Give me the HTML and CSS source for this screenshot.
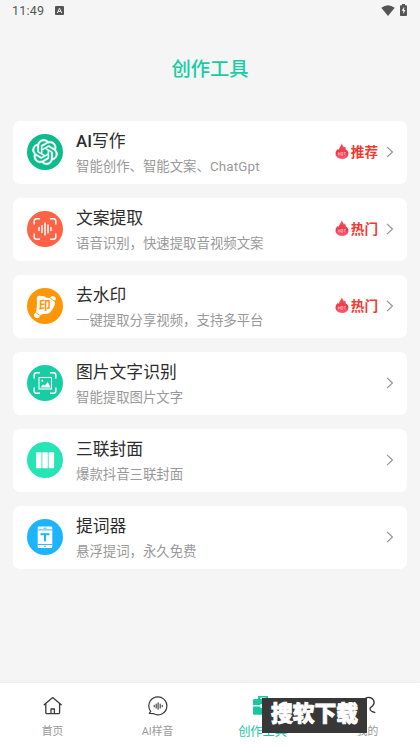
FILE: index.html
```html
<!DOCTYPE html>
<html lang="zh-CN">
<head>
<meta charset="utf-8">
<title>创作工具</title>
<link rel="stylesheet" href="styles.css">
</head>
<body>
<svg class="defs" aria-hidden="true">
  <defs>
    <linearGradient id="flame" x1="0" y1="0" x2="0" y2="1"><stop offset="0" stop-color="#f5575a"/><stop offset=".6" stop-color="#f0344a"/><stop offset="1" stop-color="#f6647a"/></linearGradient>
    <symbol id="hot" viewBox="0 0 14 17">
      <path fill="url(#flame)" d="M6.800.3c.2 1.900 1.900 2.700 2.200 4.400.5-.4.700-.9.700-1.500 1 .9 1.200 2.100 1 3.200 2 1 3.100 2.600 2.700 4.800C13 14.300 10.500 16 7 16S.7 14.100.5 11.100C.4 8.700 1.500 7 3.100 5.700c.1.600.3 1 .7 1.300C3.900 4.300 6.500 3 6.800.3z"/>
      <path d="M3.300 9.300v3.100M5.100 9.300v3.100M3.300 10.800h1.800M6.200 9.400h1.600v2.900H6.200zM8.700 9.400h2.300M9.900 9.400v3" fill="none" stroke="#fbb4b7" stroke-width=".8"/>
    </symbol>
    <symbol id="next" viewBox="0 0 8 12"><path d="M1 .9 6.400 6 1 11.100" fill="none" stroke="#999" stroke-width="1.300"/></symbol>
    <symbol id="frame" viewBox="0 0 36 36"><path d="M7.200 13.500V10q0-2.300 2.300-2.300H13M23 7.700h3.500q2.300 0 2.300 2.300v3.500M28.800 22.500V26q0 2.300-2.300 2.300H23M13 28.300H9.500q-2.300 0-2.300-2.300v-3.500" fill="none" stroke="#fff" stroke-width="1.500"/></symbol>
  </defs>
</svg>
<div class="screen">
  <header class="status">
    <span class="time">11:49</span>
    <svg class="input-mode" viewBox="0 0 9 9"><rect width="9" height="9" rx="1" fill="#555"/><path d="M2.300 7 4.500 2.200 6.700 7M3.200 5.400h2.600" fill="none" stroke="#eee" stroke-width="1"/></svg>
    <span class="spacer"></span>
    <svg class="wifi" viewBox="0 0 14 11"><path d="M.3 2.800Q7-2.200 13.700 2.800L7 11z" fill="#555"/></svg>
    <svg class="battery" viewBox="0 0 7 12"><path d="M2 0h3v1.200h1.200q.8 0 .8.800v9.200q0 .8-.8.800H.8q-.8 0-.8-.8V2q0-.8.800-.8H2z" fill="#555"/><path d="M4.200 2.800 1.600 6.800h1.600v3.200L5.500 6H4.200z" fill="#f5f5f5"/></svg>
  </header>
  <h1>创作工具</h1>
  <main class="tools">
    <section class="card">
      <svg class="icon" viewBox="0 0 36 36"><circle cx="18" cy="18" r="18" fill="#0dbb8b"/><g transform="translate(5.300 5.300) scale(1.060)"><path fill="#fff" stroke="#fff" stroke-width=".35" d="M22.282 9.821a5.985 5.985 0 0 0-.516-4.910 6.046 6.046 0 0 0-6.510-2.900A6.065 6.065 0 0 0 4.981 4.182a5.985 5.985 0 0 0-3.998 2.900 6.046 6.046 0 0 0 .743 7.097 5.980 5.980 0 0 0 .511 4.911 6.051 6.051 0 0 0 6.515 2.900A5.985 5.985 0 0 0 13.260 24a6.056 6.056 0 0 0 5.772-4.206 5.990 5.990 0 0 0 3.998-2.900 6.056 6.056 0 0 0-.747-7.073zM13.260 22.430a4.476 4.476 0 0 1-2.876-1.041l.141-.080 4.779-2.758a.795.795 0 0 0 .393-.681v-6.737l2.020 1.169a.071.071 0 0 1 .038.052v5.583a4.504 4.504 0 0 1-4.495 4.494zM3.600 18.304a4.471 4.471 0 0 1-.535-3.014l.142.085 4.783 2.758a.771.771 0 0 0 .780 0l5.843-3.369v2.332a.080.080 0 0 1-.033.062L9.740 19.950a4.499 4.499 0 0 1-6.140-1.646zM2.341 7.896a4.485 4.485 0 0 1 2.365-1.973V11.600a.766.766 0 0 0 .388.677l5.815 3.354-2.020 1.169a.076.076 0 0 1-.071 0l-4.830-2.787A4.504 4.504 0 0 1 2.341 7.872zm16.597 3.855-5.833-3.387L15.119 7.200a.076.076 0 0 1 .071 0l4.830 2.791a4.494 4.494 0 0 1-.677 8.105v-5.678a.790.790 0 0 0-.405-.667zm2.010-3.023-.142-.085-4.774-2.782a.776.776 0 0 0-.785 0L9.409 9.230V6.897a.066.066 0 0 1 .028-.061l4.830-2.787a4.499 4.499 0 0 1 6.681 4.660zM8.306 12.863l-2.020-1.164a.080.080 0 0 1-.038-.057V6.074a4.499 4.499 0 0 1 7.376-3.453l-.142.080L8.704 5.460a.795.795 0 0 0-.393.681zm1.098-2.365 2.602-1.500 2.607 1.500v2.999l-2.598 1.500-2.606-1.500z"/></g></svg>
      <div class="copy"><h2><span class="latin">AI</span>写作</h2><p>智能创作、智能文案、<span class="gpt">ChatGpt</span></p></div>
      <div class="badge"><svg class="hot"><use href="#hot"/></svg><span class="tag">推荐</span></div><svg class="next"><use href="#next"/></svg>
    </section>
    <section class="card">
      <svg class="icon" viewBox="0 0 36 36"><circle cx="18" cy="18" r="18" fill="#ff6345"/><use href="#frame"/><path d="M12 16.500v3M15 14.500v7M18 12v12M21 14v8M24 16.500v3" stroke="#fff" stroke-width="1.500" stroke-linecap="round"/></svg>
      <div class="copy"><h2>文案提取</h2><p>语音识别，快速提取音视频文案</p></div>
      <div class="badge"><svg class="hot"><use href="#hot"/></svg><span class="tag">热门</span></div><svg class="next"><use href="#next"/></svg>
    </section>
    <section class="card">
      <svg class="icon" viewBox="0 0 36 36"><circle cx="18" cy="18" r="18" fill="#ff9605"/><path d="M9.800 10q0-2 2-2.200l5.700.4q1.500 1.800 5.500 1.900 1-2.600 3.300-2.100 2.500.6 2.800 3l-1.900 1.800q1.300 2.500.5 4.200-.5 1.900-2 3.700l-2.500 3.700q-2 1.500-5.300 1.700-2.300-.2-4.400 1l-1.500 2.300q-1.300 1-3 .3-2.500-1-2.200-3.200l2.500-3.100.7-7.200z" fill="#fff"/><path d="m8.300 24.300 4.500 3M23.300 10.200l4.200 3" stroke="#ff9605" stroke-width=".8"/><text x="17.700" y="21.900" text-anchor="middle" class="seal">印</text></svg>
      <div class="copy"><h2>去水印</h2><p>一键提取分享视频，支持多平台</p></div>
      <div class="badge"><svg class="hot"><use href="#hot"/></svg><span class="tag">热门</span></div><svg class="next"><use href="#next"/></svg>
    </section>
    <section class="card">
      <svg class="icon" viewBox="0 0 36 36"><circle cx="18" cy="18" r="18" fill="#18cda4"/><use href="#frame"/><rect x="12" y="12.500" width="12.500" height="11.500" fill="none" stroke="#fff" stroke-width="1.100"/><circle cx="15.300" cy="15.800" r="1" fill="#fff"/><path d="m13.500 22.500 2.500-3 1.700 1 3.100-3.500 2.700 5.500z" fill="#fff"/></svg>
      <div class="copy"><h2>图片文字识别</h2><p>智能提取图片文字</p></div>
      <svg class="next"><use href="#next"/></svg>
    </section>
    <section class="card">
      <svg class="icon" viewBox="0 0 36 36"><circle cx="18" cy="18" r="18" fill="#25e5b5"/><g fill="#fff"><rect x="9" y="10.300" width="5.500" height="16" rx="1"/><rect x="15.300" y="10.300" width="5.500" height="16" rx=".6"/><rect x="21.600" y="10.300" width="5.500" height="16" rx="1"/></g></svg>
      <div class="copy"><h2>三联封面</h2><p>爆款抖音三联封面</p></div>
      <svg class="next"><use href="#next"/></svg>
    </section>
    <section class="card">
      <svg class="icon" viewBox="0 0 36 36"><circle cx="18" cy="18" r="18" fill="#1cb5fb"/><path d="M12 7.500h12q1.300 0 1.300 1.300v19q0 1.300-1.300 1.300H12q-1.300 0-1.300-1.300v-19q0-1.300 1.300-1.300z" fill="#fff"/><path d="M10.700 10.900h14.600M10.700 25.500h14.600M16.500 9.200h3" stroke="#1cb5fb" stroke-width=".9"/><path d="M13.500 15.300h9M18 15v7.200" stroke="#1cb5fb" stroke-width="2"/><circle cx="18" cy="27.300" r=".8" fill="#1cb5fb"/></svg>
      <div class="copy"><h2>提词器</h2><p>悬浮提词，永久免费</p></div>
      <svg class="next"><use href="#next"/></svg>
    </section>
  </main>
  <nav class="tabs">
    <a class="tab"><svg viewBox="0 0 20 20"><path d="M1.200 8.800 9.700 1.600l8.500 7.200M2.800 7.700v8.800q0 1.200 1.200 1.200h11.400q1.200 0 1.200-1.200V7.700M8 17.500V13h3.400v4.500" fill="none" stroke="#3a3a3a" stroke-width="1.300" stroke-linejoin="round" stroke-linecap="round"/></svg><span>首页</span></a>
    <a class="tab"><svg viewBox="0 0 20 20"><path d="M2.700 15.300A9 9 0 1 1 5.300 17.600L1.300 17.300z" fill="none" stroke="#3a3a3a" stroke-width="1.200" stroke-linejoin="round"/><path d="M6.200 9.300v1.400M8.200 8v4M10.100 6.700v6.600M12.200 8v4M14.200 9.300v1.400" stroke="#3a3a3a" stroke-width="1.100" stroke-linecap="round"/></svg><span>AI样音</span></a>
    <a class="tab active"><svg viewBox="0 0 20 20"><path fill="#18c7a0" fill-rule="evenodd" d="M5 3V.8Q5-.1 5.900-.1h8.200q.9 0 .9.900V3h3q1.300 0 1.300 1.300v5H12V8H7.500v1.300H0v-5Q0 3 1.300 3zM7 3h6V1.500H7zM0 10.600h7.500V12H12v-1.400h7.300v6.900q0 1.300-1.300 1.300H1.300Q0 18.800 0 17.500z"/></svg><span>创作工具</span></a>
    <a class="tab"><svg viewBox="0 0 20 20"><path d="M6.500 9.500C4.500 6 6.500 1.300 10.500 1.300c5 0 7.300 5.200 4.200 8.400-1.600 1.600-3 2.100-2.700 3.500.4 1.800 2.500 2.800 4.800 3.200M6.500 9.500Q3 12 2.700 17" fill="none" stroke="#333" stroke-width="1.300" stroke-linecap="round"/></svg><span>我的</span></a>
  </nav>
  <div class="stamp">搜软下载</div>
</div>
</body>
</html>
```

FILE: styles.css
```css
* { box-sizing: border-box; }
body { margin: 0; font-family: Roboto, "Noto Sans CJK SC", sans-serif; background: #f5f5f5; }
.defs { position: absolute; width: 0; height: 0; }
.screen { position: relative; display: flex; flex-direction: column; width: 420px; height: 746px; overflow: hidden; background: #f5f5f5; }
.status { display: flex; align-items: center; height: 20px; padding: 0 13px 0 12px; }
.time { font-size: 12.5px; letter-spacing: .2px; color: #555; line-height: 20px; padding-top: 1px; }
.input-mode { width: 9px; height: 9px; margin: 1px 0 0 11px; }
.spacer { flex: 1; }
.wifi { width: 14px; height: 11px; margin-right: 5px; }
.battery { width: 7px; height: 12px; }
h1 { margin: 36px 0 0; height: 28px; line-height: 28px; text-align: center; font-size: 19.3px; font-weight: 500; color: #18cda4; }
.tools { display: flex; flex-direction: column; gap: 14px; padding: 36.500px 13px 0; flex: 1; }
.card { display: flex; align-items: center; height: 63px; padding: 0 13px 0 14px; background: #fff; border-radius: 7px; }
.icon { flex: none; width: 36px; height: 36px; }
.copy { flex: 1; margin-left: 13px; padding-top: 3px; }
h2 { margin: 0; height: 25px; line-height: 25px; font-size: 16.8px; font-weight: 400; color: #2c2c2c; white-space: nowrap; }
.latin { font-weight: 500; }
.gpt { letter-spacing: .15px; }
.copy p { margin: 2px 0 0; height: 22px; line-height: 22px; font-size: 13.4px; color: #999; white-space: nowrap; }
.badge { display: flex; align-items: center; }
.hot { width: 14px; height: 17px; margin: 0 2px 1px 0; }
.tag { font-size: 13.6px; line-height: 20px; font-weight: 700; color: #f13a32; }
.next { width: 8px; height: 12px; margin-left: 8px; }
.seal { font: 700 12px "Noto Sans CJK SC", sans-serif; fill: #ff9605; }
.tabs { display: grid; grid-template-columns: repeat(4, 1fr); height: 63px; background: #fff; box-shadow: 0 -1px 2px #ececec; }
.tab { display: flex; flex-direction: column; align-items: center; padding-top: 12.500px; font-size: 10.8px; color: #999; }
.tab svg { width: 20px; height: 20px; }
.tab span { margin-top: 7px; line-height: 18px; white-space: nowrap; }
.tab.active { color: #18c7a0; font-size: 12.2px; }
.stamp { position: absolute; left: 262px; top: 698px; width: 105px; height: 35px; line-height: 32px; background: #383838; color: #fff; text-align: center; font-size: 21.8px; font-weight: 900; -webkit-text-stroke: .8px #fff; }
```
